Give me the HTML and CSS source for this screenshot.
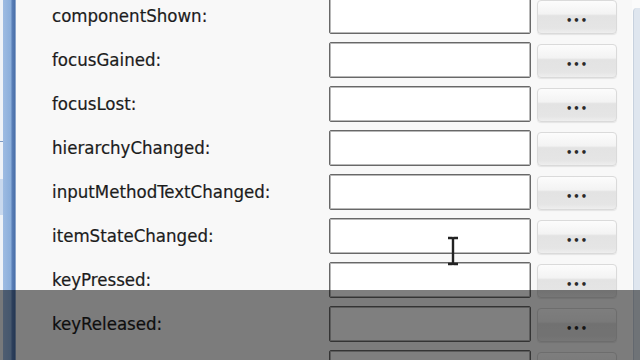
FILE: index.html
```html
<!DOCTYPE html>
<html lang="en">
<head>
  <meta charset="UTF-8">
  <title>Events</title>
  <meta name="viewport" content="width=device-width, initial-scale=1.0">
  <link rel="stylesheet" href="styles.css">
</head>
<body>
  <div class="window">
    <!-- left edge of the parent window -->
    <div class="edge">
      <div class="edge-box"></div>
      <div class="edge-tab"></div>
    </div>
    <div class="bar"></div>

    <!-- event list -->
    <div class="panel">
      <div class="event-list">
        <div class="event-row">
          <label>componentShown:</label>
          <div class="field"></div>
          <button class="more">•••</button>
        </div>
        <div class="event-row">
          <label>focusGained:</label>
          <div class="field"></div>
          <button class="more">•••</button>
        </div>
        <div class="event-row">
          <label>focusLost:</label>
          <div class="field"></div>
          <button class="more">•••</button>
        </div>
        <div class="event-row">
          <label>hierarchyChanged:</label>
          <div class="field"></div>
          <button class="more">•••</button>
        </div>
        <div class="event-row">
          <label>inputMethodTextChanged:</label>
          <div class="field"></div>
          <button class="more">•••</button>
        </div>
        <div class="event-row">
          <label>itemStateChanged:</label>
          <div class="field"></div>
          <button class="more">•••</button>
        </div>
        <div class="event-row">
          <label>keyPressed:</label>
          <div class="field"></div>
          <button class="more">•••</button>
        </div>
        <div class="event-row">
          <label>keyReleased:</label>
          <div class="field"></div>
          <button class="more">•••</button>
        </div>
        <div class="event-row">
          <label>keyTyped:</label>
          <div class="field"></div>
          <button class="more">•••</button>
        </div>
      </div>
    </div>

    <div class="scroll-strip"><div class="scroll-track"></div></div>

    <!-- text cursor -->
    <svg class="ibeam" width="14" height="30" viewBox="0 0 14 30">
      <path d="M2 2 H6 L7 3 L8 2 H12 M7 3 V27 M2 28 H6 L7 27 L8 28 H12" fill="none" stroke="#222" stroke-width="2.4"/>
    </svg>

    <!-- caption shade -->
    <div class="shade"></div>
  </div>
</body>
</html>
```

FILE: styles.css
```css
body {
  margin: 0;
  background-color: #f8f8f8;
  font-family: "DejaVu Sans Condensed", "DejaVu Sans", "Liberation Sans", sans-serif;
}

.window {
  position: relative;
  display: flex;
  width: 640px;
  height: 360px;
  overflow: hidden;
}

.edge {
  flex: 0 0 3px;
  background-color: #eef2f7;
  display: flex;
  flex-direction: column;
}

.edge-box {
  height: 141px;
  border-bottom: 1px solid #7f9cc4;
}

.edge-tab {
  height: 36px;
  margin-top: 37px;
  background-color: #c9d9ee;
}

.bar {
  flex: 0 0 13px;
  background: linear-gradient(to right, #9dbbe2 0, #8aaedb 60%, #5a7fb7 70%, #4a70a9 92%, #c8d6ea 100%);
}

.panel {
  flex: 1;
  background-color: #f8f8f8;
  padding: 0 15px 0 36px;
}

.event-list {
  display: flex;
  flex-direction: column;
  gap: 8px;
  margin-top: -2px;
}

.event-row {
  display: grid;
  grid-template-columns: 271px 202px 80px;
  column-gap: 6px;
  align-items: center;
  height: 36px;
}

.event-row label {
  font-size: 18.5px;
  color: #1c1c1c;
  white-space: nowrap;
  margin-top: -2px;
  -webkit-text-stroke: 0.2px #1c1c1c;
}

.field {
  height: 36px;
  box-sizing: border-box;
  background-color: #fff;
  border: 1px solid #686868;
  border-radius: 2px;
  box-shadow: inset 0 0 0 1px #b8b8b8;
}

.more {
  height: 34px;
  margin-top: 2px;
  padding: 7px 0 0;
  border: 1px solid #dadada;
  border-radius: 4px;
  background: linear-gradient(#fcfcfc 0%, #f3f3f3 40%, #e3e3e3 46%, #e5e5e5 85%, #eeeeee 100%);
  box-shadow: 0 1px 1px rgba(0, 0, 0, 0.08);
  font-family: "DejaVu Sans", sans-serif;
  font-size: 10px;
  font-weight: bold;
  letter-spacing: 1px;
  color: #2a2a2a;
}

.scroll-strip {
  flex: 0 0 8px;
  background-color: #fbfbfb;
  padding-top: 8px;
}

.scroll-track {
  height: 100%;
  margin-left: 1px;
  background-color: #dfe6ef;
  border-left: 1px solid #c7d1de;
  border-top-left-radius: 4px;
}

.ibeam {
  position: absolute;
  left: 446px;
  top: 236px;
}

.shade {
  position: absolute;
  left: 0;
  right: 0;
  top: 290px;
  bottom: 0;
  background-color: rgba(0, 0, 0, 0.5);
}
```
